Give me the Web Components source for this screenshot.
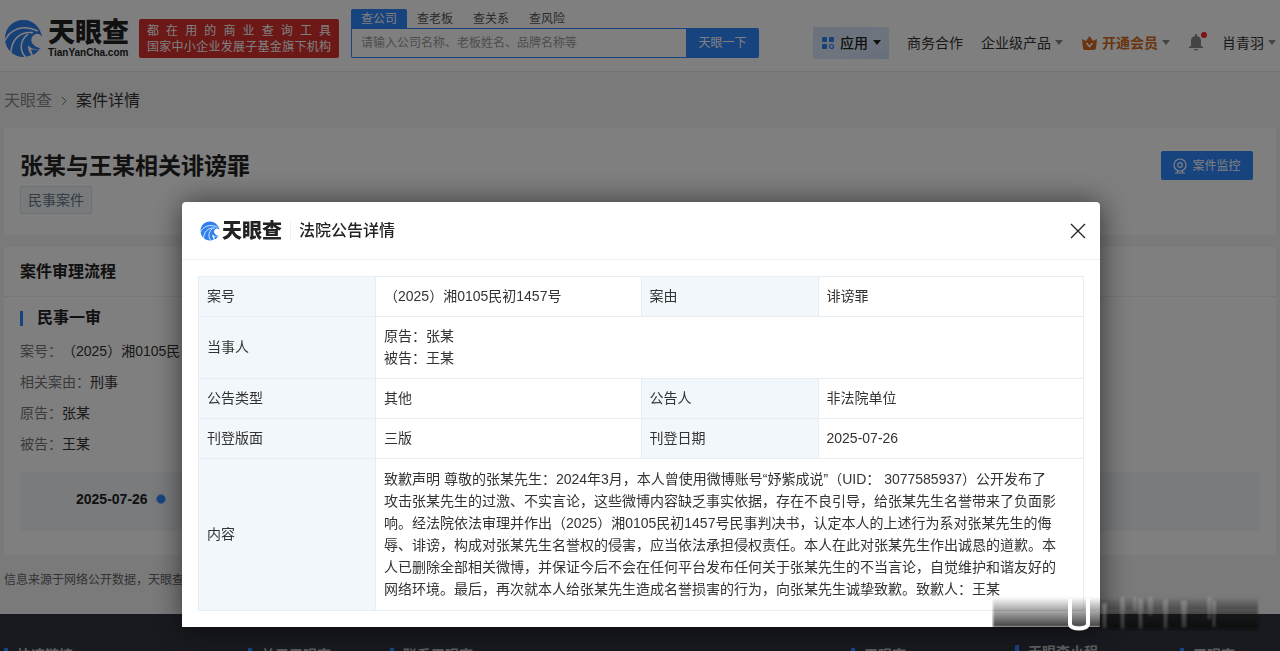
<!DOCTYPE html>
<html lang="zh-CN">
<head>
<meta charset="utf-8">
<title>案件详情 - 天眼查</title>
<style>
    html{
        height: 100%;
        overflow: hidden;
    }
    body{
        display: flex;
        flex-direction: column;
        margin: 0;
        height: 100%;
        background: #f5f5f6;
        color: #333;
        font-family: "Liberation Sans", "Noto Sans CJK SC", sans-serif;
        font-size: 14px;
        line-height: 22px;
        text-spacing-trim: space-all;
    }
</style>
</head>
<body>
<site-header></site-header>
<bread-crumbs parent="天眼查" current="案件详情"></bread-crumbs>
<case-title name="张某与王某相关诽谤罪" tag="民事案件"></case-title>
<case-flow heading="案件审理流程" stage="民事一审" date="2025-07-26">
    <case-field label="案号：">（2025）湘0105民</case-field>
    <case-field label="相关案由：">刑事</case-field>
    <case-field label="原告：">张某</case-field>
    <case-field label="被告：">王某</case-field>
</case-flow>
<source-note>信息来源于网络公开数据，天眼查</source-note>
<site-footer></site-footer>
<modal-dialog heading="法院公告详情">
    <notice-table></notice-table>
    <smear-mark slot="mark"></smear-mark>
</modal-dialog>

<script>
const reset = `
    *, :host{ box-sizing: border-box; }
    :host{ flex: none; }
    a{ color: inherit; text-decoration: none; }
    button{ border: 0; padding: 0; margin: 0; background: none; font: inherit; color: inherit; cursor: pointer; }
    h1, h2, h3, p{ margin: 0; }
    svg{ display: block; flex: none; }
`

class Base extends HTMLElement{
    constructor(){
        super()
        this.shadowDom = this.attachShadow({mode: "open"})
    }
    connectedCallback(){
        this.shadowDom.innerHTML = `<style>${reset}${this.styles()}</style>${this.markup()}`
    }
    attr(name){
        return this.getAttribute(name) || ""
    }
}

// round blue mark, size comes from --size
class BrandMark extends Base{
    styles(){
        return `
        :host{ display: block; }
        svg{ width: var(--size, 20px); height: var(--size, 20px); }
        `
    }
    markup(){
        return `
        <svg viewBox="0 0 40 40" aria-hidden="true">
            <path fill="#2f80ed" d="M20 1C9 1 1 9 1 20c0 10 8 19 19 19 3 0 6-1 8-2-3-4-4-7-3-10 3 4 8 5 13 3-5-1-9-3-10-8 0-4 3-7 6-7 2 0 4 1 5 4C38 9 30 1 20 1z"/>
            <g fill="none" stroke="#fff" stroke-linecap="round">
                <path stroke-width="1.600" d="M1 22C6 11 19 5 34 12"/>
                <path stroke-width="1.600" d="M7 34C8 22 15 13 29 14"/>
                <path stroke-width="1.600" d="M22 39C16 33 16 22 24 16"/>
            </g>
            <path fill="#2f80ed" d="M28 31c3 1 6 1 9-1-2 3-4 5-7 7-1-2-2-4-2-6z"/>
        </svg>`
    }
}

class SearchBox extends Base{
    styles(){
        return `
        :host{ display: block; width: 408px; padding-top: 9px; }
        .tabs{ display: flex; height: 19px; font-size: 12px; line-height: 18px; color: #555; }
        .tabs button{ width: 56px; }
        .tabs .on{ background: #2f88ff; color: #fff; border-radius: 2px 2px 0 0; }
        .box{ display: flex; height: 30px; }
        input{
            flex: 1;
            min-width: 0;
            border: 1px solid #2f88ff;
            border-right: 0;
            border-radius: 0 0 0 2px;
            padding: 0 9px;
            font: inherit;
            font-size: 12px;
            background: #fff;
            outline: 0;
        }
        input::placeholder{ color: #999; opacity: 1; }
        .go{ width: 73px; background: #2f88ff; color: #fff; font-size: 12px; border-radius: 0 2px 2px 0; }
        `
    }
    markup(){
        return `
        <div class="tabs">
            <button class="on">查公司</button><button>查老板</button><button>查关系</button><button>查风险</button>
        </div>
        <div class="box">
            <input type="text" aria-label="搜索" placeholder="请输入公司名称、老板姓名、品牌名称等">
            <button class="go">天眼一下</button>
        </div>`
    }
}

class NavItem extends Base{
    styles(){
        return `
        :host{ display: block; color: #333; }
        a{ display: flex; align-items: center; gap: 4px; height: 32px; white-space: nowrap; }
        .caret{ border: 4px solid transparent; border-top: 5px solid #888; border-bottom: 0; }
        :host([kind=app]) a{ gap: 5px; padding: 0 8px; background: linear-gradient(160deg, #d5e4f8, #dde9fa 60%, #c9dcf7); font-weight: 500; color: #222; }
        :host([kind=app]) .caret{ border-top-color: #222; }
        :host([kind=vip]) a{ color: #d2691e; font-weight: 600; }
        `
    }
    markup(){
        return `
        <a href="#"><slot name="icon"></slot><slot></slot>${this.hasAttribute("drop") ? `<span class="caret"></span>` : ""}</a>`
    }
}

class SiteHeader extends Base{
    styles(){
        return `
        :host{ display: flex; height: 72px; padding: 0 4px; background: #fff; border-bottom: 1px solid #e8e8e8; }
        .brand{ display: flex; align-items: center; gap: 5px; padding-top: 6px; }
        brand-mark{ --size: 39px; }
        .name{ display: block; font-size: 27px; line-height: 28px; font-weight: 900; color: #222; }
        .site{ display: block; font-family: "Liberation Sans", sans-serif; font-size: 10px; line-height: 12px; font-weight: 700; color: #222; }
        .slogan{
            width: 200px;
            height: 39px;
            margin: 19px 12px 0 10px;
            padding: 4px 8px;
            background: #d6302f;
            border-radius: 2px;
            color: #fff;
            font-size: 12px;
            line-height: 16px;
        }
        .slogan span{ display: block; text-align: justify; text-align-last: justify; }
        nav{ display: flex; align-items: center; margin-left: auto; padding-top: 14px; gap: 18px; }
        .bell{ position: relative; width: 16px; }
        .bell::after{
            content: "";
            position: absolute;
            top: -2px;
            right: -3px;
            width: 6px;
            height: 6px;
            border-radius: 50%;
            background: #f5222d;
        }
        `
    }
    markup(){
        return `
        <a class="brand" href="#">
            <brand-mark></brand-mark>
            <span><span class="name">天眼查</span><span class="site">TianYanCha.com</span></span>
        </a>
        <div class="slogan"><span>都 在 用 的 商 业 查 询 工 具</span><span>国家中小企业发展子基金旗下机构</span></div>
        <search-box></search-box>
        <nav>
            <nav-item kind="app" drop>
                <svg slot="icon" width="14" height="14" viewBox="0 0 14 14" fill="#2f80ed">
                    <rect x="1" y="1" width="5" height="5" rx="1"/><rect x="8" y="1" width="5" height="5" rx="1"/>
                    <rect x="1" y="8" width="5" height="5" rx="1"/><circle cx="10.5" cy="10.5" r="2" fill="none" stroke="#2f80ed" stroke-width="1.2"/>
                </svg>应用</nav-item>
            <nav-item>商务合作</nav-item>
            <nav-item drop>企业级产品</nav-item>
            <nav-item kind="vip" drop>
                <svg slot="icon" width="17" height="16" viewBox="0 0 17 16">
                    <path fill="#d2691e" d="M1 4l4 2 3.500-5L12 6l4-2-1 9c0 1-1 2-2 2H4c-1 0-2-1-2-2z"/>
                    <path fill="none" stroke="#fff" stroke-width="1.6" d="M5.500 8l3 3.500 3-3.500"/>
                </svg>开通会员</nav-item>
            <button class="bell" aria-label="消息">
                <svg width="16" height="17" viewBox="0 0 16 17" fill="#888">
                    <path d="M7 0h2v2c3 .5 4 2.500 4 5v5l2 1v1H1v-1l2-1V7c0-2.500 1-4.500 4-5z"/><path d="M6 15h4c0 2-4 2-4 0z"/>
                </svg>
            </button>
            <nav-item drop>肖青羽</nav-item>
        </nav>`
    }
}

class BreadCrumbs extends Base{
    styles(){
        return `
        :host{ display: flex; align-items: center; gap: 8px; height: 56px; padding: 2px 4px 0; font-size: 16px; }
        a{ color: #888; }
        `
    }
    markup(){
        return `
        <a href="#">${this.attr("parent")}</a>
        <svg width="8" height="10" viewBox="0 0 8 10" fill="none" stroke="#777"><path d="M2 1l4 4-4 4"/></svg>
        <span>${this.attr("current")}</span>`
    }
}

class CaseTitle extends Base{
    styles(){
        return `
        :host{ display: flex; justify-content: space-between; align-items: flex-start; height: 107px; margin: 0 4px; padding: 23px 23px 0 16px; background: #fff; }
        h1{ font-size: 23px; line-height: 30px; color: #222; }
        .tag{ display: inline-block; height: 28px; margin-top: 5px; padding: 0 7px; border: 1px solid #dfe5ea; background: #f0f4f7; color: #66788a; line-height: 26px; }
        button{ display: flex; align-items: center; justify-content: center; gap: 5px; width: 92px; height: 29px; background: #2f88ff; color: #fff; font-size: 12px; border-radius: 2px; }
        `
    }
    markup(){
        return `
        <div><h1>${this.attr("name")}</h1><span class="tag">${this.attr("tag")}</span></div>
        <button>
            <svg width="14" height="16" viewBox="0 0 14 16" fill="none" stroke="#fff" stroke-width="1.2">
                <circle cx="7" cy="7" r="6"/><circle cx="7" cy="7" r="2.300"/><path d="M5 12.500l-1 2.500M9 12.500l1 2.500M2 15h10"/>
            </svg>案件监控
        </button>`
    }
}

class CaseField extends Base{
    styles(){
        return `
        :host{ display: block; height: 31px; line-height: 31px; color: #333; }
        .label{ color: #777; }
        `
    }
    markup(){
        return `<span class="label">${this.attr("label")}</span><slot></slot>`
    }
}

class CaseFlow extends Base{
    styles(){
        return `
        :host{ display: block; height: 308px; margin: 12px 4px 0; background: #fff; }
        h2{ height: 50px; padding-left: 16px; border-bottom: 1px solid #eee; font-size: 16px; line-height: 50px; color: #222; }
        .body{ padding: 9px 16px 0; }
        h3{ display: flex; align-items: center; gap: 14px; height: 24px; margin-bottom: 6px; font-size: 16px; color: #222; }
        h3::before{ content: ""; width: 3px; height: 15px; background: #2f88ff; }
        .date{ display: flex; align-items: center; gap: 8px; height: 59px; margin-top: 12px; padding: 0 56px 6px; background: #f3f6fa; font-weight: 700; color: #222; }
        .date::after{ content: ""; width: 8px; height: 8px; border: 1px solid #8fc0ff; border-radius: 50%; background: #2f88ff; }
        `
    }
    markup(){
        return `
        <h2>${this.attr("heading")}</h2>
        <div class="body">
            <h3>${this.attr("stage")}</h3>
            <slot></slot>
            <div class="date">${this.attr("date")}</div>
        </div>`
    }
}

class SourceNote extends Base{
    styles(){
        return `:host{ display: block; height: 59px; padding: 14px 4px 0; font-size: 12px; color: #666; }`
    }
    markup(){
        return `<slot></slot>`
    }
}

class SiteFooter extends Base{
    styles(){
        return `
        :host{
            flex: 1;
            display: grid;
            align-items: start;
            grid-template-columns: 244fr 142fr 461fr 164fr 165fr 96fr;
            min-height: 0;
            overflow: hidden;
            padding: 30px 4px 0;
            background: #2f343e;
            color: #bbb;
        }
        h3{ display: flex; align-items: center; gap: 9px; height: 22px; font-size: 14px; white-space: nowrap; }
        h3::before{ content: ""; width: 4px; height: 14px; background: #2f88ff; }
        .up{ margin-top: -3px; }
        `
    }
    markup(){
        return `
        <h3>快速链接</h3><h3>关于天眼查</h3><h3>联系天眼查</h3>
        <h3>天眼查</h3><h3 class="up">天眼查小程</h3><h3>天眼查</h3>`
    }
}

class ModalDialog extends Base{
    styles(){
        return `
        :host{
            position: fixed;
            inset: 0;
            display: flex;
            align-items: flex-start;
            justify-content: center;
            padding: 202px 16px 0 18px;
            background: rgba(0, 0, 0, .5);
        }
        .panel{ position: relative; width: 100%; max-width: 918px; height: 425px; background: #fff; border-radius: 4px 4px 0 0; box-shadow: 1px 1px 30px rgba(0, 0, 0, .6); }
        header{ display: flex; align-items: center; height: 58px; padding: 0 14px 0 18px; border-bottom: 1px solid #eef0f2; }
        brand-mark{ --size: 20px; }
        .name{ padding: 0 8px 0 2px; border-right: 1px solid #eee; font-size: 20px; line-height: 18px; font-weight: 900; color: #222; }
        h2{ padding-left: 8px; font-size: 16px; font-weight: 500; color: #222; }
        button{ margin-left: auto; }
        .body{ padding: 16px; }
        `
    }
    markup(){
        return `
        <div class="panel" role="dialog" aria-label="${this.attr("heading")}">
            <header>
                <brand-mark></brand-mark><span class="name">天眼查</span>
                <h2>${this.attr("heading")}</h2>
                <button aria-label="关闭">
                    <svg width="16" height="16" viewBox="0 0 16 16" stroke="#222" stroke-width="1.300"><path d="M1 1l14 14M15 1L1 15"/></svg>
                </button>
            </header>
            <div class="body"><slot></slot></div>
            <slot name="mark"></slot>
        </div>`
    }
}

class NoticeTable extends Base{
    styles(){
        return `
        :host{ display: block; }
        table{ width: 100%; border-collapse: collapse; table-layout: fixed; color: #333; }
        th, td{ height: 40px; padding: 7px 8px 9px; border: 1px solid #e6eef3; text-align: left; font-weight: 400; }
        th{ background: #f1f7fb; }
        .two{ height: 62px; }
        .text{ height: 152px; white-space: nowrap; }
        `
    }
    markup(){
        return `
        <table>
            <colgroup><col style="width: 20%"><col style="width: 30%"><col style="width: 20%"><col style="width: 30%"></colgroup>
            <tr><th>案号</th><td>（2025）湘0105民初1457号</td><th>案由</th><td>诽谤罪</td></tr>
            <tr><th>当事人</th><td class="two" colspan="3">原告：张某<br>被告：王某</td></tr>
            <tr><th>公告类型</th><td>其他</td><th>公告人</th><td>非法院单位</td></tr>
            <tr><th>刊登版面</th><td>三版</td><th>刊登日期</th><td>2025-07-26</td></tr>
            <tr><th>内容</th><td class="text" colspan="3">致歉声明 尊敬的张某先生：2024年3月，本人曾使用微博账号“妤紫成说”（UID： 3077585937）公开发布了<br>
            攻击张某先生的过激、不实言论，这些微博内容缺乏事实依据，存在不良引导，给张某先生名誉带来了负面影<br>
            响。经法院依法审理并作出（2025）湘0105民初1457号民事判决书，认定本人的上述行为系对张某先生的侮<br>
            辱、诽谤，构成对张某先生名誉权的侵害，应当依法承担侵权责任。本人在此对张某先生作出诚恳的道歉。本<br>
            人已删除全部相关微博，并保证今后不会在任何平台发布任何关于张某先生的不当言论，自觉维护和谐友好的<br>
            网络环境。最后，再次就本人给张某先生造成名誉损害的行为，向张某先生诚挚致歉。致歉人：王某</td></tr>
        </table>`
    }
}

// smudged strip lying over the lower right corner of the dialog
class SmearMark extends Base{
    styles(){
        return `:host{ position: absolute; right: -162px; bottom: -6px; }`
    }
    markup(){
        return `
        <svg width="270" height="37" viewBox="0 0 270 37" aria-hidden="true">
            <defs>
                <linearGradient id="dark" x2="0" y2="1"><stop offset="0" stop-color="#111" stop-opacity="0"/><stop offset=".5" stop-color="#111" stop-opacity=".4"/><stop offset="1" stop-color="#111" stop-opacity=".8"/></linearGradient>
                <linearGradient id="deep" x2="0" y2="1"><stop offset="0" stop-color="#111" stop-opacity="0"/><stop offset="1" stop-color="#111"/></linearGradient>
                <linearGradient id="light" x2="0" y2="1"><stop offset="0" stop-color="#aaa" stop-opacity=".5"/><stop offset="1" stop-color="#888" stop-opacity=".3"/></linearGradient>
                <filter id="soft"><feGaussianBlur stdDeviation="1"/></filter>
            </defs>
            <g filter="url(#soft)">
                <rect x="1" y="1" width="107" height="30" fill="url(#dark)"/>
                <rect x="108" y="1" width="158" height="32" fill="url(#deep)"/>
                <g fill="url(#light)">
                    <rect x="111" y="8" width="3" height="24"/><rect x="129" y="1" width="3" height="31"/><rect x="142" y="1" width="2" height="15"/>
                    <rect x="147" y="3" width="3" height="29"/><rect x="157" y="1" width="3" height="18"/><rect x="172" y="4" width="3" height="28"/>
                    <rect x="190" y="5" width="4" height="26"/><rect x="216" y="1" width="3" height="22"/><rect x="221" y="5" width="2" height="26"/>
                </g>
            </g>
            <path fill="none" stroke="#fff" stroke-width="4" d="M78 3v25c0 6 18 6 18 0V3"/>
        </svg>`
    }
}

window.customElements.define("brand-mark", BrandMark)
window.customElements.define("search-box", SearchBox)
window.customElements.define("nav-item", NavItem)
window.customElements.define("site-header", SiteHeader)
window.customElements.define("bread-crumbs", BreadCrumbs)
window.customElements.define("case-title", CaseTitle)
window.customElements.define("case-field", CaseField)
window.customElements.define("case-flow", CaseFlow)
window.customElements.define("source-note", SourceNote)
window.customElements.define("site-footer", SiteFooter)
window.customElements.define("modal-dialog", ModalDialog)
window.customElements.define("notice-table", NoticeTable)
window.customElements.define("smear-mark", SmearMark)
</script>
</body>
</html>
